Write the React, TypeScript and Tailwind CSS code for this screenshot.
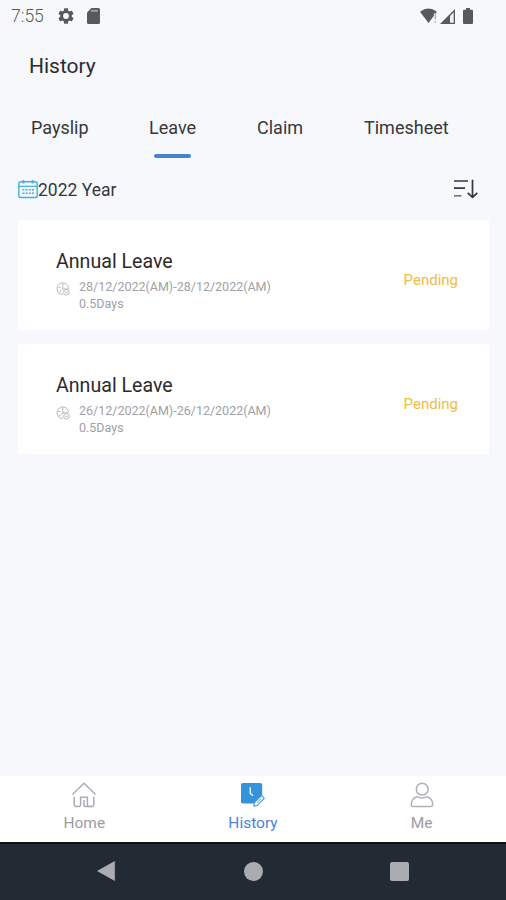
import { useState } from 'react';

// --- Types ---
type LeaveItem = {
    id: number;
    title: string;
    period: string;
    days: string;
    status: string;
};

const tabs = [
    { name: 'Payslip', width: 'w-[118px]' },
    { name: 'Leave', width: 'w-[108px]' },
    { name: 'Claim', width: 'w-[107px]' },
    { name: 'Timesheet', width: 'w-[110px]' },
];

const leaves: LeaveItem[] = [
    { id: 1, title: 'Annual Leave', period: '28/12/2022(AM)-28/12/2022(AM)', days: '0.5Days', status: 'Pending' },
    { id: 2, title: 'Annual Leave', period: '26/12/2022(AM)-26/12/2022(AM)', days: '0.5Days', status: 'Pending' },
];

// --- Status bar ---
function StatusBar() {
    return (
        <div className="flex h-8 shrink-0 items-center pl-[11px] pr-[33px] text-[#58595c]">
            <span className="w-[47px] text-[17.5px] leading-8 font-light">7:55</span>
            <svg className="h-4 w-4" viewBox="2 2 20 20" fill="currentColor">
                <path d="M19.14 12.94c.04-.3.06-.61.06-.94s-.02-.64-.07-.94l2.03-1.58a.49.49 0 0 0 .12-.61l-1.92-3.32a.49.49 0 0 0-.59-.22l-2.39.96a7 7 0 0 0-1.62-.94l-.36-2.54a.48.48 0 0 0-.48-.41h-3.84a.48.48 0 0 0-.47.41l-.36 2.54c-.59.24-1.13.57-1.62.94l-2.39-.96a.48.48 0 0 0-.59.22L2.74 8.87a.48.48 0 0 0 .12.61l2.03 1.58c-.05.3-.09.63-.09.94s.02.64.07.94l-2.03 1.58a.49.49 0 0 0-.12.61l1.92 3.32c.12.22.37.29.59.22l2.39-.96c.5.38 1.03.7 1.62.94l.36 2.54c.05.24.24.41.48.41h3.84c.24 0 .44-.17.47-.41l.36-2.54a7 7 0 0 0 1.62-.94l2.39.96c.22.08.47 0 .59-.22l1.92-3.32a.48.48 0 0 0-.12-.61zM12 15.6a3.6 3.6 0 1 1 0-7.2 3.6 3.6 0 0 1 0 7.2" />
            </svg>
            <svg className="ml-[13px] h-4 w-[13px]" viewBox="0 0 13 16" fill="currentColor">
                <path d="M4.5 0H11.5Q13 0 13 1.5V14.5Q13 16 11.5 16H1.5Q0 16 0 14.5V4.5Z" />
                <path d="M4 2.8H11" stroke="#a3a4a8" strokeWidth="1.8" />
            </svg>
            <div className="ml-auto flex items-center">
                <svg className="h-4 w-[18px]" viewBox="0 0 18 16">
                    <path d="M0 3.8Q8.5-3 17 3.8L8.5 15Z" fill="currentColor" />
                    <path d="M13.8 5.5H18V16H13.8Z" fill="#f7f8fc" />
                    <path d="M15.3 5.5V11.5M15.3 13V14.5" stroke="#b5b6ba" strokeWidth="1.6" />
                </svg>
                <svg className="ml-[2px] h-[15px] w-[15px]" viewBox="0 0 15 15">
                    <path d="M0 15L15 0V15Z" fill="currentColor" />
                    <path d="M10 7L13.7 3.2V13.8H10Z" fill="#eeeff3" />
                </svg>
                <svg className="ml-[8px] h-4 w-[10px]" viewBox="0 0 10 16" fill="currentColor">
                    <path d="M3 0H7V1.8H9Q10 1.8 10 2.8V15Q10 16 9 16H1Q0 16 0 15V2.8Q0 1.8 1 1.8H3Z" />
                </svg>
            </div>
        </div>
    );
}

// --- Icons ---
function CalendarIcon() {
    return (
        <svg className="h-[19px] w-5" viewBox="0 0 20 19" fill="none" stroke="#3fafe6">
            <rect x="0.8" y="1.8" width="18.4" height="15.7" rx="1.8" strokeWidth="1.4" />
            <path d="M1 6.3H19" strokeWidth="1.2" />
            <path d="M5.5 0V3.5M14.5 0V3.5" strokeWidth="1.7" />
            <path d="M4.5 9.8H16M4.5 13.3H16" strokeWidth="1.6" strokeDasharray="2 1.15" />
        </svg>
    );
}

function SortIcon() {
    return (
        <svg className="h-5 w-6" viewBox="0 0 24 20" fill="none" stroke="#35363a" strokeWidth="1.7">
            <path d="M0 2H14M0 9.2H11" />
            <path d="M0 16.8H7.5" stroke="#77787c" />
            <path d="M18.5 .8V18M13.7 13.8L18.5 18.4L23.3 13.8" />
        </svg>
    );
}

function PeriodIcon() {
    return (
        <svg className="h-[14px] w-[14px]" viewBox="0 0 14 14" fill="none" stroke="#b7b8bc">
            <path d="M7 12.5A5.8 5.8 0 1 1 12.6 6.8" />
            <path d="M6.8 1.5V7H12M6.8 7L2.7 10.3M2.3 5.5H4.5" />
            <circle cx="10.4" cy="10.2" r="2.8" />
            <path d="M9 10.2H11.8" />
        </svg>
    );
}

function HomeIcon() {
    return (
        <svg className="h-[26px] w-6" viewBox="0 0 24 26" fill="none" stroke="#a9adb9" strokeWidth="1.5" strokeLinecap="round">
            <path d="M.9 12L12 1.3L23.1 12" strokeLinejoin="round" />
            <path d="M2.2 15.5V22Q2.2 24.6 4.7 24.6H6.5Q8.6 24.6 8.6 22.6V15.2H15.4V22.6Q15.4 24.6 17.5 24.6H19.3Q21.8 24.6 21.8 22V15.5" />
            <path d="M11.9 18.5V22.5Q11.9 24.6 14 24.6H17.5" />
        </svg>
    );
}

function HistoryIcon() {
    return (
        <svg className="h-[26px] w-6" viewBox="0 0 24 26" fill="none">
            <path d="M1.8 1H19.4Q21.2 1 21.2 2.8V14L13.8 21.5H1.8Q0 21.5 0 19.7V2.8Q0 1 1.8 1Z" fill="#3593d9" />
            <path d="M9.3 5.2V11.5L12 13.6" stroke="#e5f3ff" strokeWidth="1.5" />
            <path d="M20.5 13.5L23.3 16.3L16.3 23.3L12.8 24.2L13.5 20.5Z" fill="#fff" stroke="#4d9fe0" strokeWidth="1.2" strokeLinejoin="round" />
            <path d="M16 20.7L20 16.8" stroke="#4d9fe0" />
        </svg>
    );
}

function MeIcon() {
    return (
        <svg className="h-[26px] w-6" viewBox="0 0 24 26" fill="none" stroke="#b0b1b8" strokeWidth="1.5">
            <circle cx="12.2" cy="7.2" r="5.9" />
            <path d="M7 14.6Q1.3 16.6 1.3 22.6Q1.3 24.6 3.4 24.6H20.6Q22.7 24.6 22.7 22.6Q22.7 16.6 17 14.6Q12 17.2 7 14.6Z" strokeLinejoin="round" />
        </svg>
    );
}

function LeaveCard({ item }: { item: LeaveItem }) {
    return (
        <div className="flex h-[110px] items-start bg-white pl-[38px] pr-[31px]">
            <div className="flex-1 pt-[30px]">
                <h2 className="text-[19.6px] leading-6 text-[#2b2b2e]">{item.title}</h2>
                <div className="mt-1 flex">
                    <div className="mt-1 w-[23px]">
                        <PeriodIcon />
                    </div>
                    <div className="text-[12.5px] leading-[17px] text-[#a0a1a5]">
                        <p>{item.period}</p>
                        <p>{item.days}</p>
                    </div>
                </div>
            </div>
            <span className="mt-[50px] text-[15px] leading-5 text-[#edbd42]">{item.status}</span>
        </div>
    );
}

const navItems = [
    { name: 'Home', Icon: HomeIcon, color: 'text-[#9b9ca0]' },
    { name: 'History', Icon: HistoryIcon, color: 'text-[#4a83d6]' },
    { name: 'Me', Icon: MeIcon, color: 'text-[#9b9ca0]' },
];

export default function App() {
    const [activeTab, setActiveTab] = useState('Leave');

    return (
        <div className="flex h-[900px] w-[506px] flex-col overflow-hidden bg-[#f7f8fc] font-['Roboto',sans-serif]">
            <StatusBar />
            <h1 className="mt-[18px] pl-[29px] text-[21px] leading-8 text-[#2b2b2e]">History</h1>

            <div className="mt-[34px] flex h-[43px] pl-[31px]">
                {tabs.map(tab => (
                    <button key={tab.name} onClick={() => setActiveTab(tab.name)} className={`${tab.width} flex items-start`}>
                        <span className="flex flex-col items-center">
                            <span className="text-lg leading-6 text-[#36373a]">{tab.name}</span>
                            {activeTab === tab.name && <span className="mt-[14px] h-1 w-[37px] rounded-full bg-[#4a82d2]" />}
                        </span>
                    </button>
                ))}
            </div>

            <div className="mt-[18px] flex h-6 items-center pl-[18px] pr-[28px]">
                <CalendarIcon />
                <span className="pt-px text-[17.5px] leading-6 text-[#36373a]">2022 Year</span>
                <div className="ml-auto">
                    <SortIcon />
                </div>
            </div>

            <div className="mt-[19px] flex flex-1 flex-col gap-[14px] pl-[18px] pr-[17px]">
                {leaves.map(item => (
                    <LeaveCard key={item.id} item={item} />
                ))}
            </div>

            <nav className="flex h-[66px] shrink-0 bg-white">
                {navItems.map(({ name, Icon, color }) => (
                    <button key={name} className={`flex flex-1 flex-col items-center pt-[6px] text-[15.5px] leading-5 ${color}`}>
                        <Icon />
                        <span className="mt-[5px]">{name}</span>
                    </button>
                ))}
            </nav>

            <div className="flex h-[58px] shrink-0 items-center justify-between border-t-2 border-[#0d1218] bg-[#222a34] pb-[2px] pl-[96px] pr-[97px]">
                <svg className="h-[22px] w-5" viewBox="0 0 20 22">
                    <path d="M.3 11L19.2 .4V21.6Z" fill="#a9adb2" stroke="#151b23" strokeWidth=".6" />
                </svg>
                <div className="h-[19px] w-[19px] rounded-full bg-[#a9adb2]" />
                <div className="h-[19px] w-[19px] rounded-[2px] bg-[#a9adb2]" />
            </div>
        </div>
    );
}
